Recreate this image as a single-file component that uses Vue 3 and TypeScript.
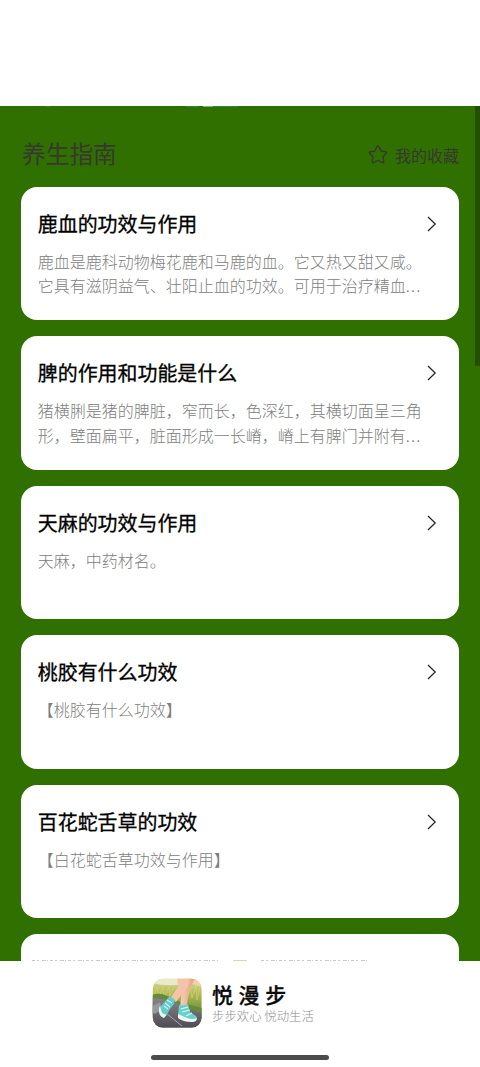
<script setup lang="ts">
interface Article {
  title: string
  lines: string[]
  truncated?: boolean
}

const articles: Article[] = [
  {
    title: '鹿血的功效与作用',
    lines: ['鹿血是鹿科动物梅花鹿和马鹿的血。它又热又甜又咸。', '它具有滋阴益气、壮阳止血的功效。可用于治疗精血'],
    truncated: true,
  },
  {
    title: '脾的作用和功能是什么',
    lines: ['猪横脷是猪的脾脏，窄而长，色深红，其横切面呈三角', '形，壁面扁平，脏面形成一长嵴，嵴上有脾门并附有'],
    truncated: true,
  },
  { title: '天麻的功效与作用', lines: ['天麻，中药材名。'] },
  { title: '桃胶有什么功效', lines: ['【桃胶有什么功效】'] },
  { title: '百花蛇舌草的功效', lines: ['【白花蛇舌草功效与作用】'] },
]
</script>

<template>
  <div class="screen">
    <div class="status"></div>
    <main class="guide">
      <svg class="remnant" viewBox="0 0 480 1" width="480" height="1">
        <path d="M45 .5h5" stroke="#6f7f2c" opacity=".6" />
        <path d="M186 .5h12M212 .5h26" stroke="#3f8f6a" opacity=".7" />
        <path d="M203 .5h10" stroke="#8fae70" />
      </svg>
      <header class="head">
        <h1>养生指南</h1>
        <div class="fav">
          <svg width="20" height="20" viewBox="0 0 20 20" fill="none" stroke="#37382f" stroke-width="1.4" stroke-linejoin="round">
            <path d="M8.9 1.8Q10 .2 11.1 1.8L13.1 6L17.6 6.7Q19.3 7.2 18.1 8.6L15 11.7L15.8 16.4Q15.8 18.2 14.2 17.5L10 15.3L5.8 17.5Q4.2 18.2 4.2 16.4L5 11.7L1.9 8.6Q.7 7.2 2.4 6.7L6.9 6Z" />
          </svg>
          <span>我的收藏</span>
        </div>
      </header>
      <section class="list">
        <article v-for="item in articles" :key="item.title" class="card">
          <div class="row">
            <h2>{{ item.title }}</h2>
            <svg class="chevron" width="10" height="16" viewBox="0 0 10 16" fill="none" stroke="#222" stroke-width="1.2">
              <path d="M1 1L8.2 8L1 15" />
            </svg>
          </div>
          <p v-for="(line, i) in item.lines" :key="line">{{ line }}<span v-if="item.truncated && i === item.lines.length - 1" class="dots">...</span></p>
        </article>
        <article class="card"></article>
      </section>
      <div class="scrollbar"></div>
      <svg class="edge" viewBox="0 0 480 1" width="480" height="1">
        <path d="M32 .5H218M261 .5H368" stroke="#cacaca" stroke-dasharray="3 2 2 3 4 1 1 2" />
        <path d="M233 .5h14" stroke="#d2d6bc" />
      </svg>
    </main>
    <footer class="brand">
      <div class="identity">
        <svg class="logo" width="50" height="50" viewBox="0 0 50 50">
          <defs>
            <clipPath id="logo-clip"><rect x=".8" y=".8" width="48.8" height="48.8" rx="10" /></clipPath>
            <linearGradient id="grass" x1="0" y1="0" x2="0" y2="1">
              <stop offset="0" stop-color="#dbe0a4" />
              <stop offset=".3" stop-color="#b2bd58" />
              <stop offset=".6" stop-color="#7d993c" />
              <stop offset="1" stop-color="#55752b" />
            </linearGradient>
            <linearGradient id="skin" x1="0" y1="0" x2="1" y2="0">
              <stop offset="0" stop-color="#f8cdb5" />
              <stop offset="1" stop-color="#e3a084" />
            </linearGradient>
            <linearGradient id="road" x1="0" y1="0" x2="0" y2="1">
              <stop offset="0" stop-color="#85858c" />
              <stop offset="1" stop-color="#4f4a53" />
            </linearGradient>
          </defs>
          <g clip-path="url(#logo-clip)">
            <rect width="50" height="50" fill="url(#grass)" />
            <path d="M0 0H50V6Q42 3 32 6Q15 9 0 5Z" fill="#ebe9c8" />
            <path d="M38 0H50V9L40 6Z" fill="#f4cfa9" />
            <path d="M2 20L5 9L7 19L11 8L12 19L17 9L18 18L22 9M35 21L38 9L40 20L44 8L45 22L48 9" fill="none" stroke="#dcd477" stroke-width="1" opacity=".6" />
            <path d="M0 17Q8 14 15 18L31 25L50 30V36H0Z" fill="#66893a" />
            <path d="M0 20L17 22L50 36V50H0Z" fill="url(#road)" />
            <path d="M0 28L8 24L10 31L3 36L0 34Z" fill="#99999d" />
            <path d="M14 35L30 48" stroke="#a9a8ab" stroke-width="1" />
            <path d="M32 0H43L37 13L34.5 29L28 30L29.5 15Z" fill="url(#skin)" />
            <path d="M25 0H38L35 10L24 24L18.5 20L26 9Z" fill="#f5c3a8" />
            <path d="M17 19Q19 18 23 22L22 26L18 31L14 38Q11 39 9 36L8 29Z" fill="#64cdc8" />
            <path d="M8 28L10 35L14.5 37L12 40Q6 38 7 30Z" fill="#e6f6f1" />
            <path d="M15 22L20 25M13 25L18 29M12 28L16 31" stroke="#caf4ee" stroke-width="1.1" />
            <path d="M27 27Q32 28 36 26L38 34L44 38Q46 41 43 42L32 41L26 38Z" fill="#69d1cb" />
            <path d="M26 36L35 40Q41 42 45 40Q45 44 40 44Q31 44 26 40Z" fill="#f2faf6" />
            <path d="M29 31L36 29M30 34L38 32M34 38L40 35" stroke="#d6faf4" stroke-width="1.2" />
          </g>
        </svg>
        <div class="names">
          <strong>悦漫步</strong>
          <span>步步欢心 悦动生活</span>
        </div>
      </div>
      <div class="home-bar"></div>
    </footer>
  </div>
</template>

<style>
body {
  margin: 0;
  background: #fff;
}
</style>

<style scoped>
.screen {
  width: 480px;
  height: 1067px;
  overflow: hidden;
  background: #fff;
  font-family: "Noto Sans CJK SC", sans-serif;
}
.status {
  height: 106px;
}
.guide {
  position: relative;
  height: 855px;
  overflow: hidden;
  background: #307000;
}
.remnant {
  position: absolute;
  top: 0;
  left: 0;
}
.edge {
  position: absolute;
  bottom: 0;
  left: 0;
}
.head {
  display: flex;
  align-items: center;
  justify-content: space-between;
  height: 36px;
  padding: 29px 21px 0 22px;
  color: #37382f;
}
h1 {
  margin: 0;
  font-size: 23.7px;
  font-weight: 400;
  line-height: 36px;
}
.fav {
  display: flex;
  align-items: center;
  gap: 7px;
  padding-top: 3px;
  font-size: 16px;
  line-height: 24px;
}
.list {
  display: flex;
  flex-direction: column;
  gap: 16px;
  padding: 15.5px 20.7px 0 21.3px;
}
.card {
  box-sizing: border-box;
  flex: none;
  height: 133.5px;
  padding: 22px 16px 0 16.5px;
  border-radius: 16px;
  background: #fff;
}
.row {
  display: flex;
  align-items: center;
  justify-content: space-between;
  height: 30px;
  margin-bottom: 10.3px;
}
h2 {
  margin: 0;
  color: #000;
  font-size: 19.95px;
  font-weight: 400;
  line-height: 30px;
  -webkit-text-stroke: 0.3px #000;
}
.chevron {
  margin-right: 6px;
}
p {
  margin: 0;
  color: #808080;
  font-size: 16px;
  font-weight: 300;
  line-height: 24.3px;
  white-space: nowrap;
}
.dots {
  letter-spacing: 1.2px;
}
.scrollbar {
  position: absolute;
  top: 0;
  right: 0;
  width: 5px;
  height: 260px;
  background: #225000;
}
.brand {
  display: flex;
  flex-direction: column;
  align-items: center;
  height: 106px;
}
.identity {
  display: flex;
  width: 176px;
  height: 50px;
  margin-top: 17px;
}
.names {
  display: flex;
  flex-direction: column;
  margin-left: 10px;
  white-space: nowrap;
}
strong {
  height: 31px;
  color: #0b0b0b;
  font-size: 21px;
  font-weight: 500;
  line-height: 32px;
  letter-spacing: 5.6px;
  -webkit-text-stroke: 0.3px #0b0b0b;
}
.names span {
  color: #8c8c8c;
  font-size: 12.4px;
  font-weight: 300;
  line-height: 15px;
}
.home-bar {
  width: 178px;
  height: 5px;
  margin-top: 27px;
  border-radius: 3px;
  background: #4c4c4c;
}
</style>
